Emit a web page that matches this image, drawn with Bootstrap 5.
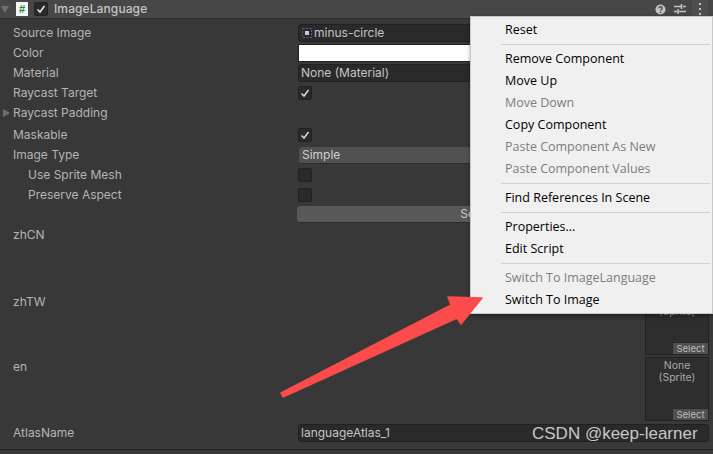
<!DOCTYPE html>
<html lang="en">
  <head>
    <meta charset="UTF-8" />
    <meta name="viewport" content="width=device-width, initial-scale=1.0" />
    <title>ImageLanguage Inspector</title>
    <link href="https://cdn.jsdelivr.net/npm/bootstrap@5.3.3/dist/css/bootstrap.min.css" rel="stylesheet" />
    <style>
      html, body { height: 454px; overflow: hidden; }
      body {
        background: #383838;
        color: #b4b4b4;
        font-family: Inter, "Liberation Sans", sans-serif;
        font-size: 12px;
        line-height: 20px;
        position: relative;
      }
      .comp-head {
        height: 19px;
        background: #474747;
        border-bottom: 1px solid #2b2b2b;
        color: #c4c4c4;
        font-weight: 500;
        letter-spacing: .1px;
      }
      .fold-down { width: 0; height: 0; margin: 0 7px 0 1px; border: 4px solid transparent; border-top: 7px solid #6f6f6f; border-bottom: 0; }
      .script-ico {
        width: 12px; height: 14px; margin-right: 6px;
        background: #f4f4f4; color: #1f8a2f;
        font: bold 11px/14px "Liberation Sans", sans-serif; text-align: center;
      }
      .check-box {
        width: 14px; height: 14px;
        background: #2a2a2a; border: 1px solid #212121; border-radius: 2px;
      }
      .head-check { margin-right: 6px; }
      .head-tools { margin-left: auto; }
      .tool-slot { width: 16px; height: 18px; margin-left: 4px; }
      .tool-last { background: #4f4f4f; margin-right: 5px; }
      .insp-body { padding-top: 4px; }
      .insp-row { height: 20px; padding-right: 4px; }
      .row-gap { margin-top: 2px; }
      .row-tall67 { height: 67px; }
      .row-tall66 { height: 66px; }
      .row-button { height: 18px; margin-bottom: 1px; }
      .prop-name { width: 298px; padding-left: 13px; flex: none; }
      .prop-nudge { padding-top: 1px; }
      .prop-indent { padding-left: 28px; }
      .fold-right { width: 0; height: 0; margin: 0 3px 0 3px; border: 4px solid transparent; border-left: 7px solid #6f6f6f; border-right: 0; }
      .prop-fold { padding-left: 0; }
      .text-field {
        height: 18px; flex: 1;
        background: #2a2a2a; border: 1px solid #212121; border-radius: 3px;
        line-height: 16px; padding-left: 2px; color: #c4c4c4; overflow: hidden;
      }
      .text-field.with-ico { padding-left: 0; }
      .color-field { background: #fff; border: 1px solid #222; border-radius: 0; height: 18px; flex: 1; }
      .drop-field { height: 17px; flex: 1; margin-left: 1px; background: #515151; border-bottom: 1px solid #2c2c2c; border-radius: 3px; line-height: 15px; padding-left: 3px; color: #d0d0d0; }
      .wide-btn {
        height: 17px; flex: 1; margin-left: -1px;
        background: #585858; border-bottom: 1px solid #2c2c2c; border-radius: 3px;
        line-height: 16px; color: #d0d0d0; text-align: center;
      }
      .sprite-ico { width: 10px; height: 10px; margin: 0 2px 0 3px; flex: none; }
      .sprite-well {
        width: 64px; height: 64px; margin-left: auto;
        background: #2e2e2e; border: 1px solid #222;
        font-size: 10.5px; line-height: 12px; text-align: center; color: #a8a8a8;
        padding-top: 2px;
      }
      .well-select {
        margin-top: auto; align-self: flex-end;
        width: 36px; height: 12px; background: #505050; border-top: 1px solid #2a2a2a; border-left: 1px solid #2a2a2a;
        font-size: 9.5px; line-height: 11px; color: #bdbdbd;
      }
      .insp-foot { margin-top: 6px; border-top: 1px solid #232323; }

      .unity-menu.dropdown-menu {
        position: absolute; left: 470px; top: 16px; width: 243px; height: 298px;
        display: block; margin: 0; padding: 2px 0 0;
        background: #f0f0f0; border: 1px solid #c8c8c8; border-radius: 0;
        box-shadow: 1px 2px 5px rgba(0, 0, 0, .45);
        font-family: "Open Sans", "Liberation Sans", sans-serif; font-size: 12.5px;
      }
      .unity-menu .dropdown-item {
        height: 22px; line-height: 21px; padding: 0 0 0 34px;
        color: #000; background: none; font-size: 12.5px;
      }
      .unity-menu .dropdown-item.disabled { color: #7d7d7d; }
      .unity-menu .dropdown-divider { margin: 3px 2px 3px 30px; border-top: 1px solid #d2d2d2; opacity: 1; }

      .red-arrow { position: absolute; left: 0; top: 0; z-index: 1001; pointer-events: none; }
      .csdn-mark {
        position: absolute; left: 532px; top: 424px; z-index: 1001;
        font: 17px/20px "Liberation Sans", sans-serif; color: #c8c8c8; white-space: nowrap;
      }
    </style>
  </head>
  <body>
    <div class="comp-head d-flex align-items-center">
      <span class="fold-down"></span>
      <span class="script-ico">#</span>
      <span class="check-box head-check d-flex align-items-center justify-content-center">
        <svg width="10" height="10" viewBox="0 0 10 10"><path d="M1.5 5.5 4 8l4.5-6" fill="none" stroke="#e6e6e6" stroke-width="1.6"/></svg>
      </span>
      <span>ImageLanguage</span>
      <div class="head-tools d-flex align-items-center">
        <span class="tool-slot d-flex align-items-center justify-content-center">
          <svg width="11" height="11" viewBox="0 0 11 11"><circle cx="5.5" cy="5.5" r="5" fill="#c2c2c2"/><path d="M3.8 4.2c.2-2 3.4-1.9 3.4 0 0 1.2-1.6 1.2-1.6 2.4" fill="none" stroke="#474747" stroke-width="1.3"/><rect x="4.9" y="7.6" width="1.4" height="1.4" fill="#474747"/></svg>
        </span>
        <span class="tool-slot d-flex align-items-center justify-content-center">
          <svg width="12" height="12" viewBox="0 0 12 12"><path d="M0 3.5h7M9 3.5h3M0 8.5h3M5 8.5h7" stroke="#c2c2c2" stroke-width="1.4"/><path d="M7.5 1v5M4 6v5" stroke="#c2c2c2" stroke-width="1.6"/></svg>
        </span>
        <span class="tool-slot tool-last d-flex align-items-center justify-content-center">
          <svg width="4" height="12" viewBox="0 0 4 12"><rect x="1" y="0" width="2" height="2" fill="#c2c2c2"/><rect x="1" y="5" width="2" height="2" fill="#c2c2c2"/><rect x="1" y="10" width="2" height="2" fill="#c2c2c2"/></svg>
        </span>
      </div>
    </div>

    <div class="insp-body">
      <div class="insp-row d-flex align-items-center">
        <span class="prop-name">Source Image</span>
        <div class="text-field with-ico d-flex align-items-center">
          <svg class="sprite-ico" viewBox="0 0 10 10"><rect x=".5" y=".5" width="9" height="9" fill="none" stroke="#6b5aa8" stroke-dasharray="2 1.5"/><rect x="3" y="3" width="4" height="4" fill="#c9c9c9"/></svg>
          <span>minus-circle</span>
        </div>
      </div>
      <div class="insp-row d-flex align-items-center">
        <span class="prop-name">Color</span>
        <div class="color-field"></div>
      </div>
      <div class="insp-row d-flex align-items-center">
        <span class="prop-name">Material</span>
        <div class="text-field">None (Material)</div>
      </div>
      <div class="insp-row d-flex align-items-center">
        <span class="prop-name">Raycast Target</span>
        <span class="check-box d-flex align-items-center justify-content-center">
          <svg width="10" height="10" viewBox="0 0 10 10"><path d="M1.5 5.5 4 8l4.5-6" fill="none" stroke="#dcdcdc" stroke-width="1.5"/></svg>
        </span>
      </div>
      <div class="insp-row d-flex align-items-center">
        <span class="prop-name prop-fold d-flex align-items-center"><span class="fold-right"></span>Raycast Padding</span>
      </div>
      <div class="insp-row row-gap d-flex align-items-center">
        <span class="prop-name">Maskable</span>
        <span class="check-box d-flex align-items-center justify-content-center">
          <svg width="10" height="10" viewBox="0 0 10 10"><path d="M1.5 5.5 4 8l4.5-6" fill="none" stroke="#dcdcdc" stroke-width="1.5"/></svg>
        </span>
      </div>
      <div class="insp-row d-flex align-items-center">
        <span class="prop-name">Image Type</span>
        <div class="drop-field">Simple</div>
      </div>
      <div class="insp-row d-flex align-items-center">
        <span class="prop-name prop-indent">Use Sprite Mesh</span>
        <span class="check-box"></span>
      </div>
      <div class="insp-row d-flex align-items-center">
        <span class="prop-name prop-indent">Preserve Aspect</span>
        <span class="check-box"></span>
      </div>
      <div class="insp-row row-button d-flex align-items-center">
        <span class="prop-name"></span>
        <div class="wide-btn">Set Native Size</div>
      </div>
      <div class="insp-row row-tall67 d-flex align-items-start">
        <span class="prop-name prop-nudge">zhCN</span>
        <div class="sprite-well d-flex flex-column"><span>None<br />(Sprite)</span><span class="well-select">Select</span></div>
      </div>
      <div class="insp-row row-tall66 d-flex align-items-start">
        <span class="prop-name prop-nudge">zhTW</span>
        <div class="sprite-well d-flex flex-column"><span>None<br />(Sprite)</span><span class="well-select">Select</span></div>
      </div>
      <div class="insp-row row-tall66 d-flex align-items-start">
        <span class="prop-name">en</span>
        <div class="sprite-well d-flex flex-column"><span>None<br />(Sprite)</span><span class="well-select">Select</span></div>
      </div>
      <div class="insp-row d-flex align-items-center">
        <span class="prop-name">AtlasName</span>
        <div class="text-field">languageAtlas_1</div>
      </div>
      <div class="insp-foot"></div>
    </div>

    <div class="dropdown-menu unity-menu">
      <a class="dropdown-item">Reset</a>
      <hr class="dropdown-divider" />
      <a class="dropdown-item">Remove Component</a>
      <a class="dropdown-item">Move Up</a>
      <a class="dropdown-item disabled">Move Down</a>
      <a class="dropdown-item">Copy Component</a>
      <a class="dropdown-item disabled">Paste Component As New</a>
      <a class="dropdown-item disabled">Paste Component Values</a>
      <hr class="dropdown-divider" />
      <a class="dropdown-item">Find References In Scene</a>
      <hr class="dropdown-divider" />
      <a class="dropdown-item">Properties...</a>
      <a class="dropdown-item">Edit Script</a>
      <hr class="dropdown-divider" />
      <a class="dropdown-item disabled">Switch To ImageLanguage</a>
      <a class="dropdown-item">Switch To Image</a>
    </div>

    <svg class="red-arrow" width="713" height="454" viewBox="0 0 713 454">
      <polygon points="281,393 283,397 457,318 461,324 482,298 448,297 451,305" fill="#fb4b4b" stroke="#fb4b4b" stroke-width="1.5" stroke-linejoin="round"/>
    </svg>
    <div class="csdn-mark">CSDN @keep-learner</div>

    <script src="https://cdn.jsdelivr.net/npm/bootstrap@5.3.3/dist/js/bootstrap.bundle.min.js"></script>
  </body>
</html>
